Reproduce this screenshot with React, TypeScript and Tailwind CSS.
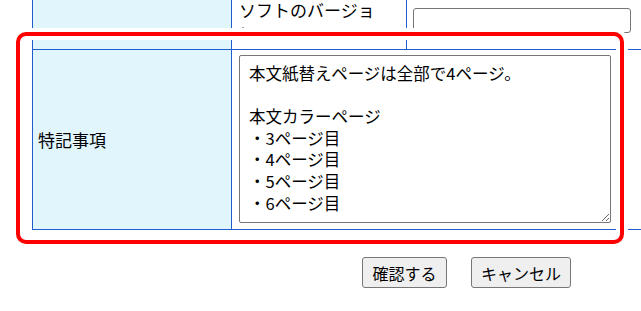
import React from "react";

const NOTE = "本文紙替えページは全部で4ページ。\n\n本文カラーページ\n・3ページ目\n・4ページ目\n・5ページ目\n・6ページ目";

export default function App() {
  return (
    <main className="relative h-[311px] w-[641px] overflow-hidden bg-white text-black font-['Noto_Sans_CJK_JP',sans-serif]">
      {/* form table */}
      <div className="ml-[32px] w-[660px] border-l border-[#1f5ccc]">
        <div className="flex h-[50px] border-b border-[#1f5ccc]">
          <div className="w-[199px] shrink-0 border-r border-[#1f5ccc] bg-[#e0f5fc]" />
          <div className="w-[175px] shrink-0 border-r border-[#1f5ccc] pl-[7px]">
            <p className="mt-[-2px] w-[145px] text-[17px] leading-[23px]">ソフトのバージョン</p>
          </div>
          <div className="flex-1 pl-[6px] pt-[8px]">
            <input type="text" className="h-[25px] w-[218px] rounded-[3px] border border-[#767676] bg-white" />
          </div>
        </div>

        <div className="flex h-[180px] border-b border-[#1f5ccc]">
          <div className="flex w-[199px] shrink-0 items-center border-r border-[#1f5ccc] bg-[#e0f5fc] pl-[5px] text-[17px]">
            特記事項
          </div>
          <div className="flex-1 pl-[7px] pt-[5px]">
            <textarea
              defaultValue={NOTE}
              className="h-[168px] w-[372px] rounded-[2px] border border-[#767676] px-[9px] pt-[7px] text-[16.5px] leading-[21.6px] outline-none"
            />
          </div>
        </div>
      </div>

      <div className="mt-[27px] flex gap-[24px] pl-[362px]">
        <button className="h-[31px] w-[85px] rounded-[3px] border border-[#767676] bg-[#efefef] text-[16px]">確認する</button>
        <button className="h-[31px] w-[100px] rounded-[3px] border border-[#767676] bg-[#efefef] text-[16px]">キャンセル</button>
      </div>

      {/* red annotation frame */}
      <div className="pointer-events-none absolute left-[16px] top-[32px] h-[212px] w-[608px] rounded-[10px] border-4 border-[#ff0000] shadow-[0_0_0_4px_#fff,inset_0_0_0_4px_#fff]" />
    </main>
  );
}
